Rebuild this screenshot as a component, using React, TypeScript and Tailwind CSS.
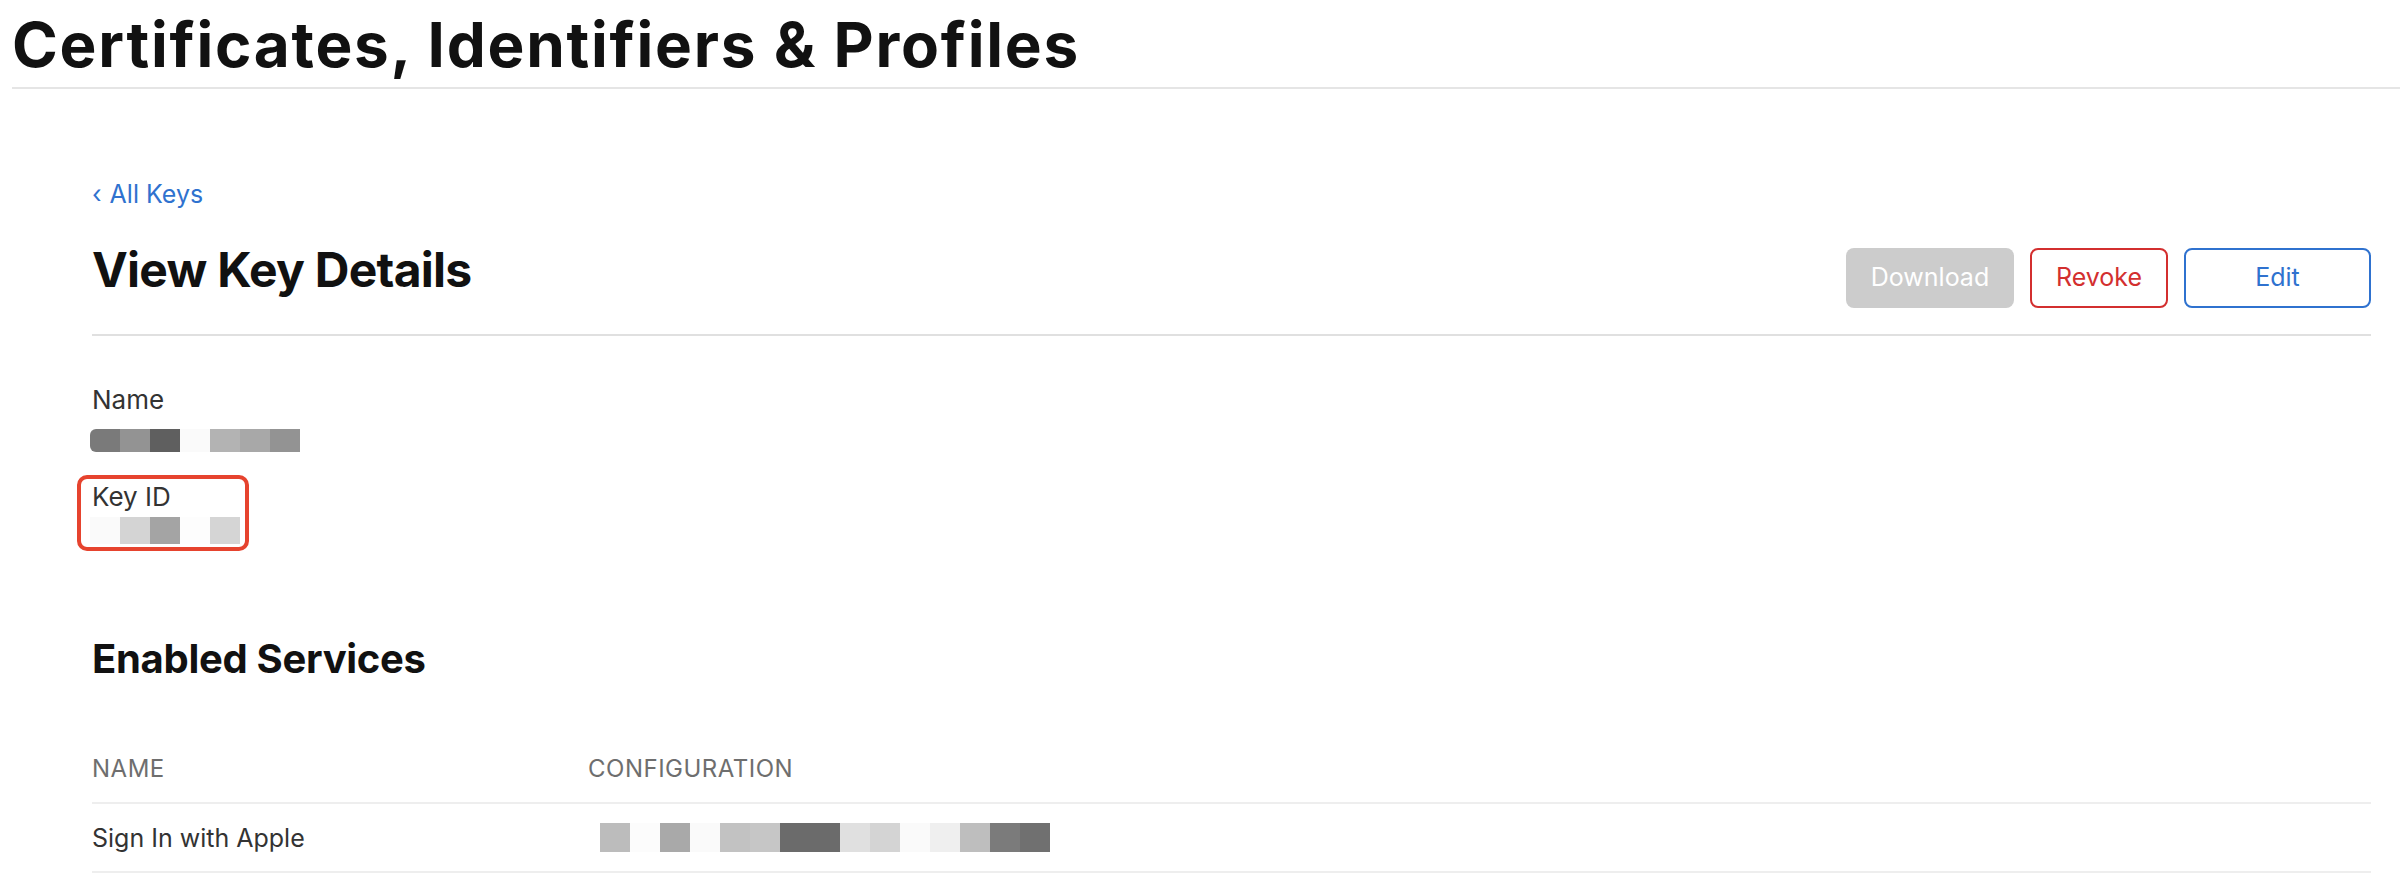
import React from 'react';

const nameBlocks = ['#7a7a7a', '#939393', '#5f5f5f', '#fafafa', '#b3b3b3', '#a8a8a8', '#939393'];
const keyBlocks = ['#fafafa', '#d4d4d4', '#a4a4a4', '#fdfdfd', '#d5d5d5'];
const configBlocks = [
  '#bcbcbc', '#fcfcfc', '#a9a9a9', '#fafafa', '#c2c2c2', '#c6c6c6', '#6b6b6b', '#6b6b6b',
  '#e0e0e0', '#d4d4d4', '#fafafa', '#efefef', '#bebebe', '#7b7b7b', '#707070',
];

// pixelated redaction strip
function Redacted({ colors, height }: { colors: string[]; height: string }) {
  return (
    <div className={`flex ${height}`}>
      {colors.map((c, i) => (
        <div key={i} className="w-[30px] h-full" style={{ backgroundColor: c }} />
      ))}
    </div>
  );
}

export default function App() {
  return (
    <div className="w-[2400px] h-[880px] bg-white overflow-hidden font-['Inter','Noto_Sans',sans-serif] text-[#111]">
      {/* page title */}
      <div className="ml-[12px] pt-[10px] pb-[7px] border-b-2 border-[#e5e5e5]">
        <h1 className="text-[62px] leading-[70px] font-bold tracking-[1.75px]">
          Certificates, Identifiers &amp; Profiles
        </h1>
      </div>

      <div className="pl-[92px] pr-[29px]">
        {/* back link */}
        <div className="pt-[89px] text-[25px] leading-[32px] text-[#2f72cf]">
          <span className="mr-[8px]">‹</span>All Keys
        </div>

        {/* header */}
        <div className="mt-[32px] flex justify-between items-start pb-[26px] border-b-2 border-[#e0e0e0]">
          <h2 className="text-[48px] leading-[56px] font-bold tracking-[-0.75px]">View Key Details</h2>
          <div className="mt-[6px] flex gap-[16px]">
            <button className="w-[168px] h-[60px] rounded-[8px] bg-[#cccccc] text-white text-[25px]">
              Download
            </button>
            <button className="w-[138px] h-[60px] rounded-[8px] border-2 border-[#d32f2f] text-[#d32f2f] text-[25px]">
              Revoke
            </button>
            <button className="w-[187px] h-[60px] rounded-[8px] border-2 border-[#2f72cf] text-[#2f72cf] text-[25px]">
              Edit
            </button>
          </div>
        </div>

        {/* details */}
        <div className="pt-[49px]">
          <div className="text-[26px] leading-[30px] text-[#333]">Name</div>
          <div className="mt-[14px] -ml-[2px] rounded-l-[6px] overflow-hidden w-fit">
            <Redacted colors={nameBlocks} height="h-[23px]" />
          </div>

          <div className="relative mt-[30px]">
            <div className="text-[26px] leading-[30px] text-[#333]">Key ID</div>
            <div className="mt-[5px] -ml-[2px]">
              <Redacted colors={keyBlocks} height="h-[27px]" />
            </div>
            {/* annotation */}
            <div className="absolute left-[-15px] top-[-7px] w-[172px] h-[76px] border-4 border-[#e6432e] rounded-[10px]" />
          </div>
        </div>

        {/* services */}
        <h3 className="mt-[91px] text-[40px] leading-[48px] font-bold tracking-[-0.3px]">Enabled Services</h3>

        <div className="mt-[72px]">
          <div className="flex pb-[19px] border-b-2 border-[#eeeeee] text-[24px] leading-[28px] text-[#6e6e6e] tracking-[0.5px]">
            <div className="w-[496px]">NAME</div>
            <div>CONFIGURATION</div>
          </div>
          <div className="flex items-center h-[69px] border-b-2 border-[#eeeeee] text-[25px] leading-[28px] text-[#333]">
            <div className="w-[496px]">Sign In with Apple</div>
            <div className="ml-[12px]">
              <Redacted colors={configBlocks} height="h-[29px]" />
            </div>
          </div>
        </div>
      </div>
    </div>
  );
}
